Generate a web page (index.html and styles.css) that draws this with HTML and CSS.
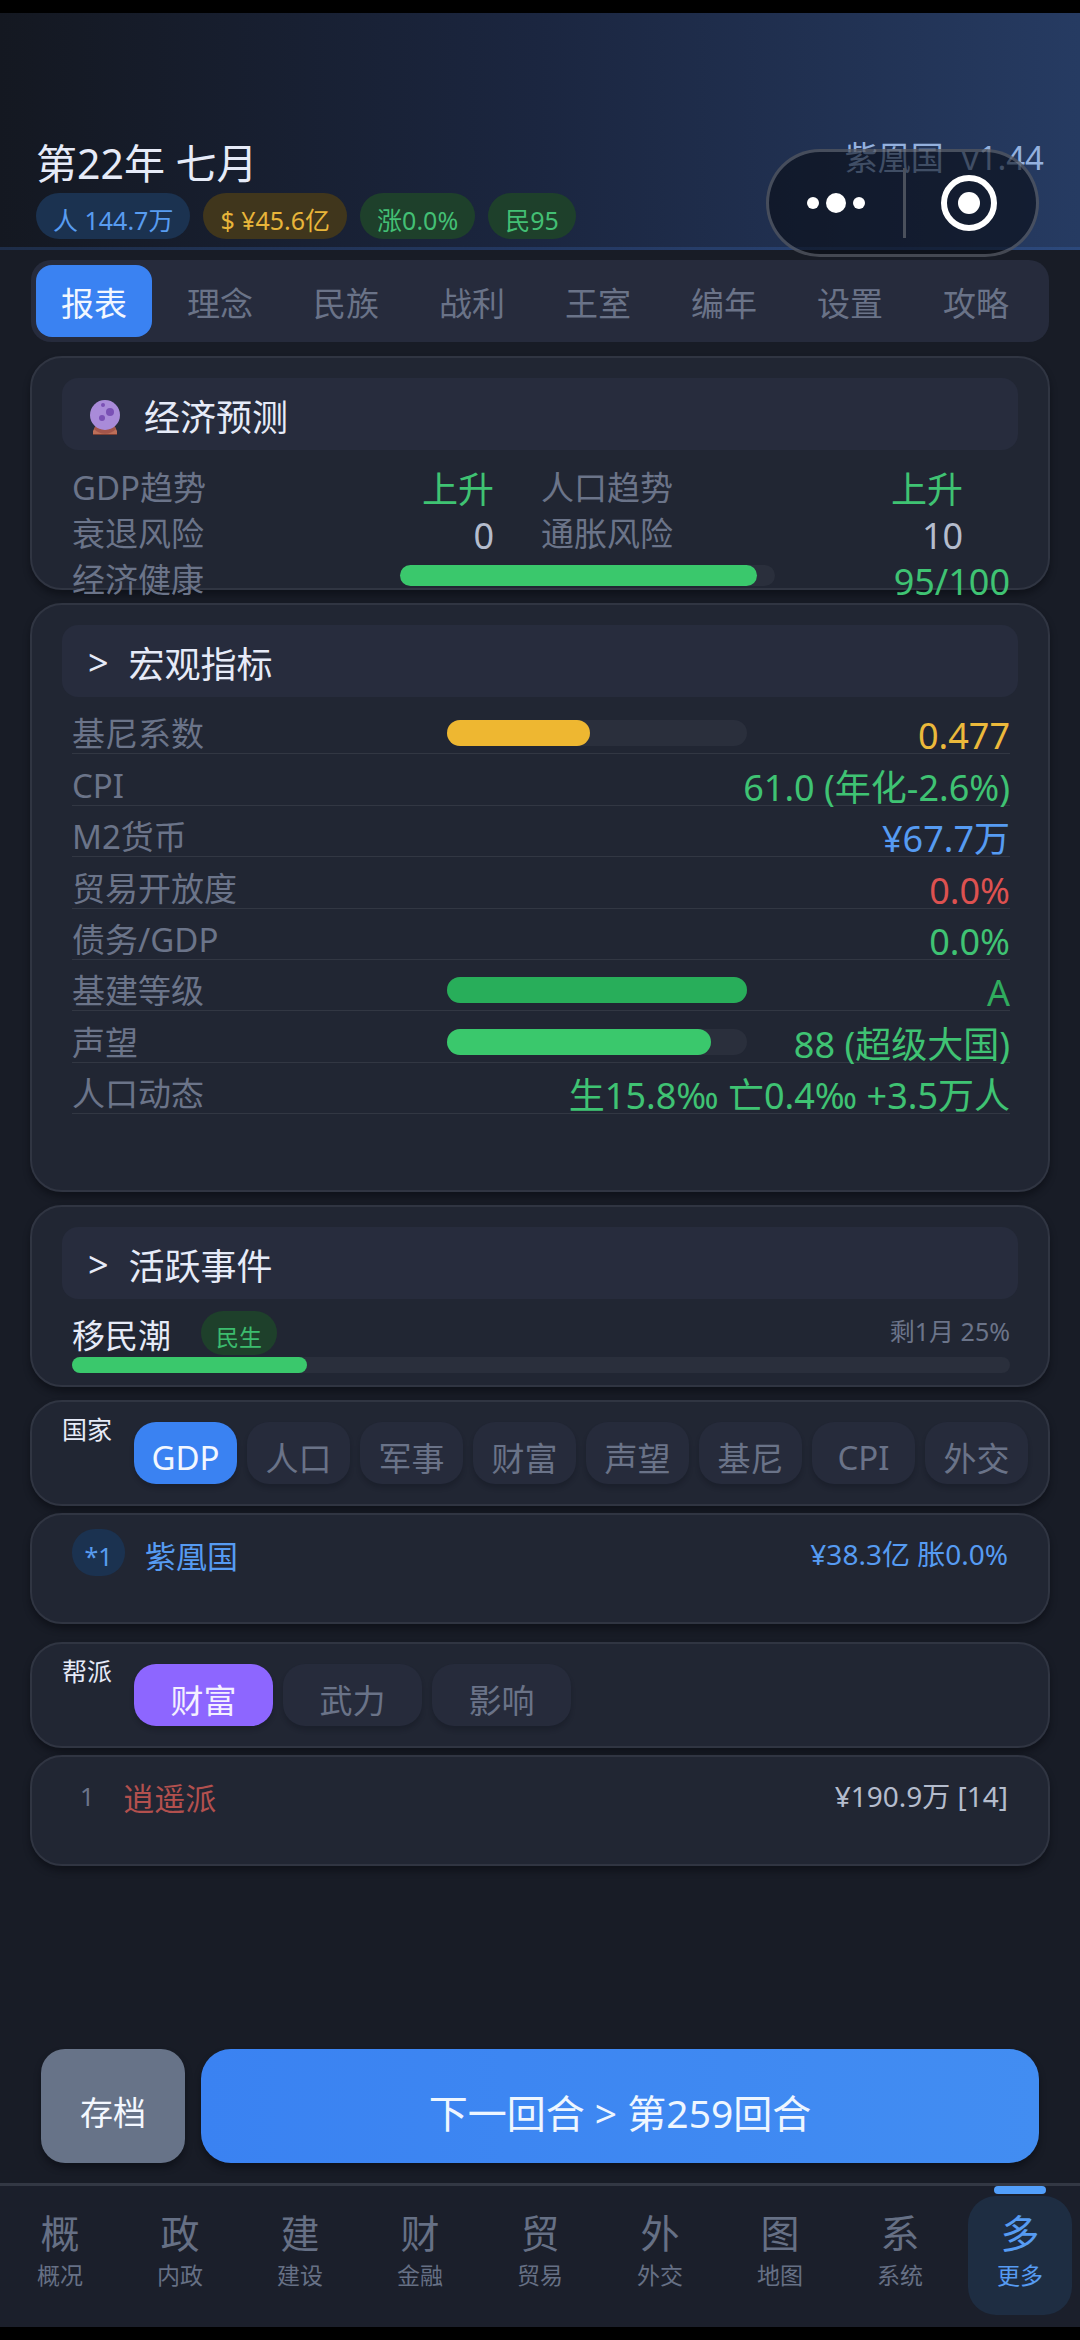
FILE: index.html
```html
<!DOCTYPE html>
<html lang="zh-CN">
<head>
<meta charset="utf-8">
<meta name="viewport" content="width=device-width, initial-scale=1">
<title>紫凰国</title>
<link rel="stylesheet" href="styles.css">
</head>
<body>
<div class="app">
  <header class="top">
    <div class="top-line">
      <h1 class="date">第22年 七月</h1>
      <div class="realm"><span>紫凰国</span><span>v1.44</span></div>
    </div>
    <div class="stats">
      <span class="pill pill-blue">人 144.7万</span>
      <span class="pill pill-gold">$ ¥45.6亿</span>
      <span class="pill pill-green">涨0.0%</span>
      <span class="pill pill-green">民95</span>
    </div>
    <div class="capsule">
      <button class="capsule-btn" type="button" aria-label="更多">
        <svg width="58" height="24" viewBox="0 0 58 24" fill="#fff"><circle cx="6" cy="12" r="6"/><circle cx="29" cy="12" r="10"/><circle cx="52" cy="12" r="6"/></svg>
      </button>
      <button class="capsule-btn" type="button" aria-label="关闭">
        <svg width="58" height="58" viewBox="0 0 58 58"><circle cx="29" cy="29" r="25" fill="none" stroke="#fff" stroke-width="6"/><circle cx="29" cy="29" r="11" fill="#fff"/></svg>
      </button>
    </div>
  </header>

  <nav class="tabs">
    <button class="tab tab-on" type="button">报表</button>
    <button class="tab" type="button">理念</button>
    <button class="tab" type="button">民族</button>
    <button class="tab" type="button">战利</button>
    <button class="tab" type="button">王室</button>
    <button class="tab" type="button">编年</button>
    <button class="tab" type="button">设置</button>
    <button class="tab" type="button">攻略</button>
  </nav>

  <main class="cards">
    <section class="card">
      <h2 class="heading">
        <svg width="36" height="40" viewBox="0 0 36 40"><path d="M5 40v-4l3-6h18l3 6v4z" fill="#bd6f59"/><path d="M5 39h24v1H5z" fill="#7d4034"/><path d="M7 32h20l1 2a15 15 0 0 1-22 0z" fill="#a3554a"/><circle cx="17" cy="20" r="15" fill="#a98bd9"/><circle cx="22" cy="17" r="4" fill="#7a50b5"/><circle cx="14" cy="23" r="3" fill="#7a50b5"/><circle cx="15" cy="10" r="2" fill="#7a50b5"/></svg>
        <span>经济预测</span>
      </h2>
      <div class="forecast">
        <div class="pair">
          <div class="cell"><span class="label">GDP趋势</span><span class="value green">上升</span></div>
          <div class="cell"><span class="label">人口趋势</span><span class="value green">上升</span></div>
        </div>
        <div class="pair">
          <div class="cell"><span class="label">衰退风险</span><span class="value plain">0</span></div>
          <div class="cell"><span class="label">通胀风险</span><span class="value plain">10</span></div>
        </div>
        <div class="health">
          <span class="label">经济健康</span>
          <div class="track"><div class="fill fill-green" style="width:95%"></div></div>
          <span class="value green">95/100</span>
        </div>
      </div>
    </section>

    <section class="card card-macro">
      <h2 class="heading"><span>&gt;</span><span>宏观指标</span></h2>
      <div class="macro">
        <div class="metric metric-bar"><span class="label">基尼系数</span><div class="track"><div class="fill fill-gold" style="width:47.7%"></div></div><span class="value gold">0.477</span></div>
        <div class="metric"><span class="label">CPI</span><span class="value green">61.0 (年化-2.6%)</span></div>
        <div class="metric"><span class="label">M2货币</span><span class="value blue">¥67.7万</span></div>
        <div class="metric"><span class="label">贸易开放度</span><span class="value red">0.0%</span></div>
        <div class="metric"><span class="label">债务/GDP</span><span class="value green">0.0%</span></div>
        <div class="metric metric-bar"><span class="label">基建等级</span><div class="track"><div class="fill fill-deep" style="width:100%"></div></div><span class="value deep">A</span></div>
        <div class="metric metric-bar"><span class="label">声望</span><div class="track"><div class="fill fill-green" style="width:88%"></div></div><span class="value green">88 (超级大国)</span></div>
        <div class="metric"><span class="label">人口动态</span><span class="value green">生15.8‰ 亡0.4‰ +3.5万人</span></div>
      </div>
    </section>

    <section class="card card-events">
      <h2 class="heading"><span>&gt;</span><span>活跃事件</span></h2>
      <div class="event">
        <span class="event-name">移民潮</span>
        <span class="chip">民生</span>
        <span class="event-left">剩1月 25%</span>
      </div>
      <div class="track event-track"><div class="fill fill-green" style="width:25%"></div></div>
    </section>

    <section class="card card-rank">
      <h3 class="rank-title">国家</h3>
      <div class="sorts">
        <button class="sort sort-blue" type="button">GDP</button>
        <button class="sort" type="button">人口</button>
        <button class="sort" type="button">军事</button>
        <button class="sort" type="button">财富</button>
        <button class="sort" type="button">声望</button>
        <button class="sort" type="button">基尼</button>
        <button class="sort" type="button">CPI</button>
        <button class="sort" type="button">外交</button>
      </div>
    </section>
    <section class="card card-entry">
      <span class="badge">*1</span>
      <span class="entry-name blue">紫凰国</span>
      <span class="entry-value blue">¥38.3亿 胀0.0%</span>
    </section>

    <section class="card card-rank">
      <h3 class="rank-title">帮派</h3>
      <div class="sorts sorts-wide">
        <button class="sort sort-purple" type="button">财富</button>
        <button class="sort" type="button">武力</button>
        <button class="sort" type="button">影响</button>
      </div>
    </section>
    <section class="card card-entry">
      <span class="place">1</span>
      <span class="entry-name dim-red">逍遥派</span>
      <span class="entry-value plain">¥190.9万 [14]</span>
    </section>
  </main>

  <div class="actions">
    <button class="save" type="button">存档</button>
    <button class="next" type="button">下一回合 &gt; 第259回合</button>
  </div>

  <nav class="dock">
    <a class="dock-item" href="#overview"><span class="dock-icon">概</span><span class="dock-label">概况</span></a>
    <a class="dock-item" href="#politics"><span class="dock-icon">政</span><span class="dock-label">内政</span></a>
    <a class="dock-item" href="#build"><span class="dock-icon">建</span><span class="dock-label">建设</span></a>
    <a class="dock-item" href="#finance"><span class="dock-icon">财</span><span class="dock-label">金融</span></a>
    <a class="dock-item" href="#trade"><span class="dock-icon">贸</span><span class="dock-label">贸易</span></a>
    <a class="dock-item" href="#diplomacy"><span class="dock-icon">外</span><span class="dock-label">外交</span></a>
    <a class="dock-item" href="#map"><span class="dock-icon">图</span><span class="dock-label">地图</span></a>
    <a class="dock-item" href="#system"><span class="dock-icon">系</span><span class="dock-label">系统</span></a>
    <a class="dock-item dock-on" href="#more"><span class="dock-icon">多</span><span class="dock-label">更多</span></a>
  </nav>
</div>
</body>
</html>
```
FILE: styles.css
```css
* { box-sizing: border-box; }

body {
  margin: 0;
  background: #000;
  color: #e6ebf8;
  font-family: "Noto Sans", "Noto Sans CJK SC", sans-serif;
  font-size: 33px;
}

h1, h2, h3 { margin: 0; font-weight: inherit; }

button {
  margin: 0;
  padding: 0;
  border: 0;
  background: none;
  color: inherit;
  font: inherit;
}

.app {
  display: flex;
  flex-direction: column;
  min-height: 100vh;
  border-top: 13px solid #000;
  border-bottom: 13px solid #000;
  background: #181c26;
}

/* Header */
.top {
  position: relative;
  padding: 122px 36px 8px;
  border-bottom: 3px solid rgba(70, 130, 230, 0.2);
  background: linear-gradient(90deg, #141821 0%, #1b2640 50%, #263b62 100%);
}
.top-line { display: flex; justify-content: space-between; align-items: flex-start; }
.date { font-size: 41px; line-height: 56px; }
.realm { display: flex; gap: 18px; line-height: 46px; color: #94b1de; }
.stats { display: flex; gap: 13px; margin-top: 2px; }
.pill {
  height: 46px;
  padding: 9px 17px 0;
  border-radius: 23px;
  font-size: 25px;
  line-height: 36px;
}
.pill-blue { background: #1b3250; color: #589cf0; }
.pill-gold { background: #40361c; color: #e8b53a; }
.pill-green { background: #1e402b; color: #43bf74; }

.capsule {
  position: absolute;
  top: 136px;
  right: 41px;
  display: flex;
  width: 273px;
  height: 108px;
  border: 3px solid rgba(150, 155, 165, 0.4);
  border-radius: 54px;
  background: rgba(8, 12, 20, 0.6);
}
.capsule-btn {
  display: flex;
  flex: 1;
  align-items: center;
  justify-content: center;
}
.capsule-btn + .capsule-btn::before {
  content: "";
  position: absolute;
  left: 50%;
  width: 3px;
  height: 70px;
  background: #4a505c;
}

/* Section tabs */
.tabs {
  display: flex;
  gap: 10px;
  margin: 10px 31px 14px;
  padding: 5px 15px 5px 5px;
  border-radius: 20px;
  background: #262b3c;
}
.tab {
  flex: 1;
  height: 72px;
  padding-top: 1px;
  border-radius: 16px;
  color: #6a7388;
}
.tab-on { background: #3a82f2; color: #f2f7ff; }

/* Cards */
.cards {
  display: flex;
  flex: 1;
  flex-direction: column;
  margin: 0 30px;
}
.card {
  margin-bottom: 13px;
  padding: 20px 30px 0;
  border: 2px solid #303542;
  border-radius: 32px;
  background: #212633;
  box-shadow: 0 5px 6px rgba(8, 10, 16, 0.5);
}
.heading {
  display: flex;
  align-items: center;
  gap: 20px;
  height: 72px;
  padding: 2px 26px 0;
  border-radius: 16px;
  background: #272c3d;
  font-size: 36px;
}
.label { color: #6b7489; white-space: nowrap; }
.value { font-size: 36px; text-align: right; white-space: nowrap; }
.green { color: #3fc373; }
.deep { color: #30ab5e; }
.gold { color: #ecb93b; }
.blue { color: #569bf2; }
.red { color: #dd5150; }
.dim-red { color: #b3504e; }
.plain { color: #b4bccd; }

.track { border-radius: 13px; background: #2a2f3c; }
.fill { height: 26px; border-radius: 13px; }
.fill-green { background: #3ac86c; }
.fill-gold { background: #eeb731; }
.fill-deep { background: #28ae5a; }

/* Forecast: the last row hangs over the card's lower edge */
.forecast {
  display: grid;
  grid-auto-rows: 46px;
  margin: 15px 8px -15px 10px;
}
.forecast .label { line-height: 46px; }
.forecast .value { line-height: 50px; }
.pair { display: grid; grid-template-columns: 1fr 1fr; }
.cell { display: flex; justify-content: space-between; padding-right: 10%; }
.health { display: grid; grid-template-columns: 35% 40% 25%; align-items: start; }
.health .track { margin-top: 8px; }
.health .fill { height: 21px; }

/* Macro indicators */
.card-macro { padding-bottom: 76px; }
.macro {
  display: grid;
  grid-auto-rows: 1fr;
  min-height: 411px;
  margin: 6px 8px 0 10px;
}
.metric {
  display: flex;
  justify-content: space-between;
  align-items: flex-end;
  border-bottom: 1px solid #323743;
}
.metric-bar { display: grid; grid-template-columns: 40% 32% 1fr; }
.metric .label { line-height: 38px; }
.metric .value { line-height: 34px; }
.metric .track { margin-bottom: 7px; }

/* Active events */
.card-events { padding-bottom: 12px; }
.event {
  display: flex;
  align-items: flex-start;
  margin: 12px 8px 2px 10px;
}
.event-name { line-height: 50px; }
.chip {
  height: 44px;
  margin-left: 30px;
  padding: 7px 15px 0;
  border-radius: 22px;
  background: #1e402b;
  color: #3cbc6e;
  font-size: 23px;
  line-height: 38px;
}
.event-left { margin-left: auto; color: #6b7489; font-size: 25px; line-height: 40px; }
.event-track { margin: -6px 8px 0 10px; }
.event-track .fill { height: 16px; }

/* Rankings */
.card-rank {
  display: flex;
  align-items: flex-start;
  margin-bottom: 7px;
  padding: 20px 20px 20px 30px;
}
.rank-title { width: 72px; margin-top: -13px; font-size: 25px; line-height: 40px; }
.sorts { display: flex; flex: 1; gap: 10px; }
.sort {
  flex: 1;
  height: 62px;
  padding-top: 8px;
  border-radius: 22px;
  background: #262b3b;
  box-shadow: 0 4px 4px rgba(12, 14, 24, 0.25);
  color: #6a7388;
}
.sorts-wide .sort { flex: none; width: 139px; }
.sort-blue { background: #3a82f2; color: #f2f7ff; }
.sort-purple { background: #8d66ff; color: #f4f0ff; }
.card-entry {
  display: flex;
  align-items: flex-start;
  height: 111px;
  margin-bottom: 18px;
  padding: 14px 40px 0;
}
.badge {
  width: 53px;
  height: 47px;
  padding-top: 9px;
  border-radius: 23px;
  background: #1b3250;
  color: #589cf0;
  font-size: 25px;
  line-height: 37px;
  text-align: center;
}
.place { padding-left: 8px; color: #6b7489; font-size: 25px; line-height: 50px; }
.entry-name { margin-left: 20px; font-size: 31px; line-height: 54px; }
.place + .entry-name { margin-left: 29px; }
.entry-value { margin-left: auto; font-size: 28px; line-height: 50px; }

/* Turn controls */
.actions { display: flex; gap: 16px; padding: 0 41px 20px; }
.save, .next {
  height: 114px;
  padding-top: 10px;
  box-shadow: 0 5px 6px rgba(8, 10, 16, 0.5);
}
.save { width: 144px; border-radius: 24px; background: #677388; color: #f4f8ff; }
.next {
  flex: 1;
  border-radius: 30px;
  background: linear-gradient(90deg, #3a82f2, #428df2);
  color: #eef6ff;
  font-size: 39px;
}

/* Bottom navigation */
.dock {
  display: flex;
  border-top: 3px solid #333844;
  background: #1b1f2b;
}
.dock-item {
  position: relative;
  display: flex;
  flex: 1;
  flex-direction: column;
  align-items: center;
  height: 119px;
  margin: 10px 8px 12px;
  padding-top: 11px;
  border-radius: 28px;
  color: #667085;
  text-decoration: none;
}
.dock-icon { font-size: 39px; line-height: 52px; }
.dock-label { font-size: 23px; line-height: 32px; }
.dock-on { background: #1e2d42; color: #569bf2; }
.dock-on::before {
  content: "";
  position: absolute;
  top: -10px;
  width: 52px;
  height: 8px;
  border-radius: 4px;
  background: #529ffb;
}
```
